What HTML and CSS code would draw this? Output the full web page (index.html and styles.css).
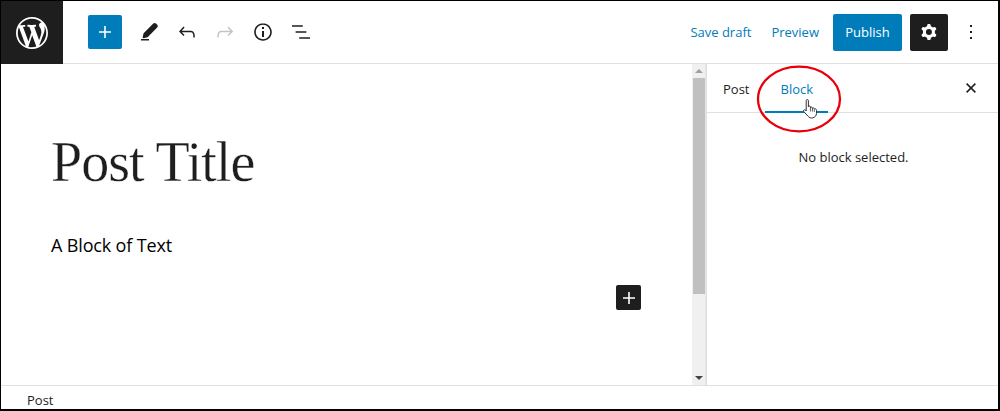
FILE: index.html
```html
<!DOCTYPE html>
<html lang="en">
<head>
<meta charset="utf-8">
<title>Post Title</title>
<link rel="stylesheet" href="styles.css">
</head>
<body>
<div class="frame">
  <header class="topbar">
    <a class="logo" aria-label="WordPress">
      <svg viewBox="0 0 20 20" width="32" height="32"><path fill="#fff" d="M20 10c0-5.51-4.49-10-10-10C4.48 0 0 4.49 0 10c0 5.52 4.48 10 10 10 5.51 0 10-4.48 10-10zM7.78 15.37L4.37 6.22c.55-.02 1.17-.08 1.17-.08.5-.06.44-1.13-.06-1.11 0 0-1.45.11-2.37.11-.18 0-.37 0-.58-.01C4.12 2.69 6.87 1.11 10 1.11c2.33 0 4.45.87 6.05 2.34-.68-.11-1.65.39-1.65 1.58 0 .74.45 1.36.9 2.1.35.61.55 1.36.55 2.46 0 1.49-1.4 5-1.4 5l-3.03-8.37c.54-.02.82-.17.82-.17.5-.05.44-1.25-.06-1.22 0 0-1.44.12-2.38.12-.87 0-2.33-.12-2.33-.12-.5-.03-.56 1.2-.06 1.22l.92.08 1.26 3.41zM17.41 10c.24-.64.74-1.87.43-4.25.7 1.29 1.05 2.71 1.05 4.25 0 3.29-1.73 6.24-4.4 7.78.97-2.59 1.94-5.2 2.92-7.78zM6.1 18.09C3.12 16.65 1.11 13.53 1.11 10c0-1.3.23-2.48.72-3.59C3.25 10.3 4.67 14.2 6.1 18.09zm4.03-6.63l2.58 6.98c-.86.29-1.76.45-2.71.45-.79 0-1.57-.11-2.29-.33.81-2.38 1.62-4.74 2.42-7.1z"/></svg>
    </a>
    <div class="tools">
      <span class="add-btn"><svg viewBox="0 0 24 24" width="24" height="24"><path fill="#fff" d="M18 11.2h-5.2V6h-1.6v5.2H6v1.6h5.2V18h1.6v-5.2H18z"/></svg></span>
      <span class="tool"><svg viewBox="0 0 24 24" width="24" height="24"><path d="M4 20.5h8V19H4v1.5zM5.6 17.4l1-4.2 9.7-9.6c.8-.8 1.9-.8 2.7 0l1.2 1.2c.8.8.8 1.9 0 2.7l-9.6 9.7-4.2 1-.8-.8z"/></svg></span>
      <span class="tool"><svg viewBox="0 0 24 24" width="24" height="24"><path d="M18.3 11.7c-.6-.6-1.4-.9-2.3-.9H6.7l2.9-3.3-1.1-1-4.5 5L8.5 16l1-1-2.7-2.7H16c.5 0 .9.2 1.3.5 1 1 1 3.4 1 4.5v.3h1.5v-.2c0-1.5 0-4.3-1.5-5.7z"/></svg></span>
      <span class="tool tool-off"><svg viewBox="0 0 24 24" width="24" height="24"><path d="M15.6 6.5l-1.1 1 2.9 3.3H8c-.9 0-1.7.3-2.3.9-1.4 1.5-1.4 4.2-1.4 5.6v.2h1.5v-.3c0-1.1 0-3.5 1-4.5.3-.3.7-.5 1.3-.5h9.2L14.5 15l1.1 1.1 4.6-4.6-4.6-5z"/></svg></span>
      <span class="tool"><svg viewBox="0 0 24 24" width="24" height="24"><path d="M12 3.2c-4.8 0-8.8 3.9-8.8 8.8 0 4.8 3.9 8.8 8.8 8.8 4.8 0 8.8-3.9 8.8-8.8 0-4.8-4-8.8-8.8-8.8zm0 16c-4 0-7.2-3.3-7.2-7.2C4.8 8 8 4.8 12 4.8s7.2 3.3 7.2 7.2c0 4-3.2 7.2-7.2 7.2zM11 17h2v-6h-2v6zm0-8h2V7h-2v2z"/></svg></span>
      <span class="tool"><svg viewBox="0 0 24 24" width="24" height="24"><path d="M13.8 5.2H3v1.5h10.8V5.2zm-3.6 12v1.5H21v-1.5H10.2zm7.2-6H6.6v1.5h10.8v-1.5z"/></svg></span>
    </div>
    <div class="actions">
      <span class="link save">Save draft</span>
      <span class="link preview">Preview</span>
      <span class="publish">Publish</span>
      <span class="settings"><svg viewBox="0 0 24 24" width="24" height="24"><path fill="#fff" fill-rule="evenodd" d="M10.289 4.836A1 1 0 0111.275 4h1.306a1 1 0 01.987.836l.244 1.466c.787.26 1.503.679 2.108 1.218l1.393-.522a1 1 0 011.216.437l.653 1.13a1 1 0 01-.23 1.273l-1.148.944a6.025 6.025 0 010 2.435l1.149.946a1 1 0 01.23 1.272l-.653 1.13a1 1 0 01-1.216.437l-1.394-.522c-.605.54-1.32.958-2.108 1.218l-.244 1.466a1 1 0 01-.987.836h-1.306a1 1 0 01-.986-.836l-.244-1.466a5.995 5.995 0 01-2.108-1.218l-1.394.522a1 1 0 01-1.217-.436l-.653-1.131a1 1 0 01.23-1.272l1.149-.946a6.026 6.026 0 010-2.435l-1.148-.944a1 1 0 01-.23-1.272l.653-1.131a1 1 0 011.217-.437l1.393.522a5.994 5.994 0 012.108-1.218l.244-1.466zM14.929 12a3 3 0 11-6 0 3 3 0 016 0z"/></svg></span>
      <span class="more"><svg viewBox="0 0 24 24" width="24" height="24"><path d="M13 19h-2v-2h2v2zm0-6h-2v-2h2v2zm0-6h-2V5h2v2z"/></svg></span>
    </div>
  </header>
  <main class="body">
    <section class="editor">
      <h1 class="post-title">Post Title</h1>
      <p class="post-text">A Block of Text</p>
      <span class="inserter"><svg viewBox="0 0 24 24" width="24" height="24"><path fill="#fff" d="M18 11.2h-5.2V6h-1.6v5.2H6v1.6h5.2V18h1.6v-5.2H18z"/></svg></span>
    </section>
    <div class="scrollbar">
      <span class="arrow arrow-up"></span>
      <span class="thumb"></span>
      <span class="arrow arrow-down"></span>
    </div>
    <aside class="sidebar">
      <div class="tabs">
        <span class="tab">Post</span>
        <span class="tab tab-active">Block</span>
        <span class="close"><svg viewBox="0 0 10 10" width="10" height="10"><path d="M.6.6l8.8 8.8M9.4.6L.6 9.4" fill="none" stroke="#1e1e1e" stroke-width="1.5"/></svg></span>
      </div>
      <p class="empty">No block selected.</p>
    </aside>
  </main>
  <footer class="footer">Post</footer>
  <svg class="circle" viewBox="0 0 88 70" width="88" height="70"><ellipse cx="44" cy="35" rx="41" ry="32.3" fill="none" stroke="#e8000b" stroke-width="2.3"/></svg>
  <svg class="hand" viewBox="0 0 16 21" width="16" height="21"><path fill="#fff" stroke="#333" stroke-width="1" stroke-linejoin="round" d="M3.2 1.6c0-1.4 2.2-1.4 2.2 0v6.2c0-1 2-1 2 0v1c0-1 2-1 2 0v.8c0-.9 1.9-.9 1.9.1l.6 0c.9 0 1.6.7 1.6 1.6v2.9c0 2.5-1.6 4.3-3.8 4.7-2 .4-3.4-.2-4.5-1.5L.8 12.6c-.9-1.2.6-2.6 1.7-1.5l.7.9z"/><path fill="none" stroke="#333" stroke-width=".8" d="M7.4 9v3.5M9.4 9.6v3M11.3 10.2v2.6"/></svg>
</div>
</body>
</html>
```
FILE: styles.css
```css
* { box-sizing: border-box; }
html, body { margin: 0; padding: 0; }
body { background: #fff; font-family: "Open Sans", "Noto Sans", sans-serif; font-size: 13px; color: #1e1e1e; }
.frame { position: relative; width: 1000px; height: 411px; display: flex; flex-direction: column; border: 1px solid #000; border-right-width: 2px; border-bottom-width: 2px; overflow: hidden; }
svg { display: block; }

.topbar { display: flex; align-items: center; height: 63px; flex: none; border-bottom: 1px solid #e0e0e0; }
.logo { width: 62px; height: 63px; margin-bottom: -1px; background: #1e1e1e; display: flex; align-items: center; justify-content: center; flex: none; }
.tools { display: flex; align-items: center; gap: 2px; margin-left: 25px; }
.add-btn { width: 34px; height: 34px; margin-right: 7px; background: #007cba; border-radius: 2px; display: flex; align-items: center; justify-content: center; }
.tool { width: 36px; height: 36px; display: flex; align-items: center; justify-content: center; }
.tool svg, .more svg { fill: #1e1e1e; }
.tool-off svg { fill: #c4c4c4; }
.actions { margin-left: auto; display: flex; align-items: center; }
.link { color: #007cba; font-size: 13px; }
.save { margin-right: 20px; }
.preview { margin-right: 14px; }
.publish { width: 69px; height: 37px; background: #007cba; color: #fff; border-radius: 2px; display: flex; align-items: center; justify-content: center; font-size: 13px; font-weight: 500; }
.settings { width: 38px; height: 37px; margin-left: 8px; background: #1e1e1e; border-radius: 2px; display: flex; align-items: center; justify-content: center; }
.more { width: 24px; height: 24px; margin: 0 15px 0 11px; }

.body { flex: 1; display: flex; min-height: 0; }
.editor { position: relative; flex: 1; padding: 53px 0 0 50px; }
.post-title { margin: 0; font-family: "Liberation Serif", serif; font-weight: 400; font-size: 56px; letter-spacing: -1px; line-height: 90px; color: #1e1e1e; -webkit-text-stroke: .35px #fff; }
.post-text { margin: 23px 0 0; font-size: 18px; letter-spacing: -.15px; line-height: 30px; color: #000; }
.inserter { position: absolute; left: 615px; top: 221px; width: 25px; height: 25px; background: #1e1e1e; border-radius: 2px; display: flex; align-items: center; justify-content: center; }

.scrollbar { width: 14px; flex: none; background: #f0f0f0; display: flex; flex-direction: column; align-items: center; border-right: 1px solid #e6e6e6; }
.arrow { width: 0; height: 0; border-left: 4px solid transparent; border-right: 4px solid transparent; flex: none; }
.arrow-up { margin: 5px 0 5px; border-bottom: 4px solid #a0a0a0; }
.arrow-down { margin: 5px 0 5px; border-top: 4px solid #444; }
.thumb { width: 12px; height: 216px; margin-bottom: auto; background: #c0c0c0; }

.sidebar { width: 292px; flex: none; border-left: 1px solid #e0e0e0; }
.tabs { height: 49px; display: flex; align-items: stretch; border-bottom: 1px solid #e0e0e0; }
.tab { padding: 2px 16px 0; display: flex; align-items: center; font-size: 13px; font-weight: 500; color: #1e1e1e; height: 48px; }
.tab-active { color: #007cba; height: 49px; padding: 3px 15px 0; border-bottom: 2px solid #007cba; }
.close { margin: 0 22px 0 auto; width: 10px; display: flex; align-items: center; padding-top: 0; }
.empty { margin: 0; padding: 35px 0 0 2px; text-align: center; font-size: 13px; line-height: 18px; color: #1e1e1e; }

.footer { height: 24px; flex: none; border-top: 1px solid #e0e0e0; padding: 5px 0 0 26px; font-size: 13px; line-height: 18px; color: #1e1e1e; }

.circle { position: absolute; left: 754px; top: 63px; }
.hand { position: absolute; left: 802px; top: 98px; }
```
